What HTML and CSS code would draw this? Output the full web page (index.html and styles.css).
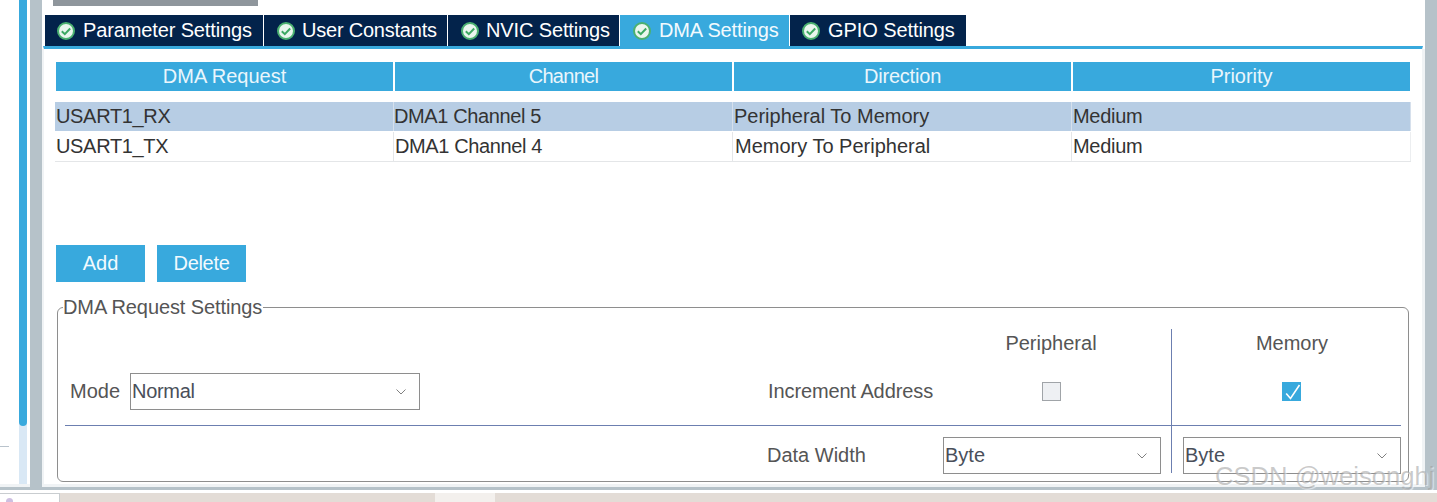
FILE: index.html
```html
<!DOCTYPE html>
<html lang="en">
<head>
<meta charset="utf-8">
<title>DMA Settings</title>
<link rel="stylesheet" href="styles.css">
</head>
<body>
<div class="app">
  <aside class="gutter"><div class="gutter-line"></div></aside>
  <div class="scroll"><div class="scroll-thumb"></div></div>
  <div class="bar"></div>
  <main class="main">
    <div class="progress"></div>
    <nav class="tabs">
      <div class="tab"><svg class="ok" viewBox="0 0 18 18"><circle cx="9" cy="9" r="8" fill="#eaf6ee" stroke="#4bb070" stroke-width="2"/><path d="M4.8 9.2l3 2.9 5.4-5.6" fill="none" stroke="#3da862" stroke-width="2"/></svg><span>Parameter Settings</span></div>
      <div class="tab"><svg class="ok" viewBox="0 0 18 18"><circle cx="9" cy="9" r="8" fill="#eaf6ee" stroke="#4bb070" stroke-width="2"/><path d="M4.8 9.2l3 2.9 5.4-5.6" fill="none" stroke="#3da862" stroke-width="2"/></svg><span>User Constants</span></div>
      <div class="tab"><svg class="ok" viewBox="0 0 18 18"><circle cx="9" cy="9" r="8" fill="#eaf6ee" stroke="#4bb070" stroke-width="2"/><path d="M4.8 9.2l3 2.9 5.4-5.6" fill="none" stroke="#3da862" stroke-width="2"/></svg><span>NVIC Settings</span></div>
      <div class="tab active"><svg class="ok" viewBox="0 0 18 18"><circle cx="9" cy="9" r="8" fill="#eaf6ee" stroke="#4bb070" stroke-width="2"/><path d="M4.8 9.2l3 2.9 5.4-5.6" fill="none" stroke="#3da862" stroke-width="2"/></svg><span>DMA Settings</span></div>
      <div class="tab"><svg class="ok" viewBox="0 0 18 18"><circle cx="9" cy="9" r="8" fill="#eaf6ee" stroke="#4bb070" stroke-width="2"/><path d="M4.8 9.2l3 2.9 5.4-5.6" fill="none" stroke="#3da862" stroke-width="2"/></svg><span>GPIO Settings</span></div>
    </nav>
    <section class="panel">
      <div class="thead">
        <div>DMA Request</div><div class="channel">Channel</div><div class="direction">Direction</div><div>Priority</div>
      </div>
      <div class="row selected">
        <div class="c-name">USART1_RX</div><div class="c-chan">DMA1 Channel 5</div><div>Peripheral To Memory</div><div class="c-prio">Medium</div>
      </div>
      <div class="row">
        <div class="c-name">USART1_TX</div><div class="c-chan">DMA1 Channel 4</div><div>Memory To Peripheral</div><div class="c-prio">Medium</div>
      </div>
      <div class="actions">
        <button class="btn">Add</button>
        <button class="btn btn-del">Delete</button>
      </div>
      <fieldset class="settings">
        <legend>DMA Request Settings</legend>
        <div class="form">
          <div class="cell-empty"></div>
          <div class="cell-empty"></div>
          <div class="col-head">Peripheral</div>
          <div class="col-head mem">Memory</div>

          <div class="mode"><label>Mode</label>
            <div class="select mode-select"><span class="normal">Normal</span><svg class="chev" viewBox="0 0 10 6"><path d="M0.5 0.5L5 5l4.5-4.5" fill="none" stroke="#808080"/></svg></div>
          </div>
          <div class="lbl inc">Increment Address</div>
          <div class="check-cell"><span class="check"></span></div>
          <div class="check-cell mem"><span class="check on"><svg viewBox="0 0 19 19"><path d="M4.2 11.5l4.3 5L17.5 3" fill="none" stroke="#fff" stroke-width="1.6"/></svg></span></div>

          <div class="divider"></div>

          <div class="cell-empty"></div>
          <div class="lbl low">Data Width</div>
          <div class="low"><div class="select"><span>Byte</span><svg class="chev" viewBox="0 0 10 6"><path d="M0.5 0.5L5 5l4.5-4.5" fill="none" stroke="#808080"/></svg></div></div>
          <div class="low mem"><div class="select"><span>Byte</span><svg class="chev" viewBox="0 0 10 6"><path d="M0.5 0.5L5 5l4.5-4.5" fill="none" stroke="#808080"/></svg></div></div>
        </div>
      </fieldset>
    </section>
  </main>
  <div class="bar"></div>
</div>
<footer class="strip">
  <div class="strip-a"><i class="dot"></i></div>
  <div class="strip-b"></div>
  <div class="strip-c"></div>
  <div class="strip-b"></div>
</footer>
<div class="watermark">CSDN @weisonghj</div>
</body>
</html>
```
FILE: styles.css
```css
* { box-sizing: border-box; }
html, body { margin: 0; height: 502px; overflow: hidden; background: #fff; }
body { font-family: "Liberation Sans", Arial, sans-serif; font-size: 20px; color: #333; position: relative; }

.app { display: grid; grid-template-columns: 19px 8px 3px 12px 1383px 12px; height: 490px; border-bottom: 3px solid #b6c2c9; background: linear-gradient(#fff, #fff) top / 100% 484px no-repeat, #f0f3f5; }
.gutter { padding-top: 446px; }
.gutter-line { width: 9px; height: 1px; background: #b9c3cc; }
.scroll { background: #d9e8f5; height: 484px; grid-column: 2; }
.scroll-thumb { height: 426px; background: #38a9dd; border-radius: 0 0 4px 4px; }
.gutter + .scroll + .bar { grid-column: 4; }
.bar { background: #b6c2c9; }

.main { display: flex; flex-direction: column; min-width: 0; padding-bottom: 3px; background: linear-gradient(#fff, #fff) top / 100% 49px no-repeat, #f0f3f5; }
.progress { width: 205px; height: 6px; margin-left: 11px; background: #8f969c; flex: none; }
.tabs { display: flex; margin: 9px 0 0 3px; height: 31px; flex: none; }
.tab { display: flex; align-items: center; background: #03234b; color: #fff; margin-right: 1px; height: 31px; padding-left: 12px; letter-spacing: -0.13px; }
.tab:nth-child(1) { width: 218px; }
.tab:nth-child(2) { width: 183px; padding-left: 13px; letter-spacing: -0.22px; }
.tab:nth-child(3) { width: 171px; padding-left: 13px; }
.tab:nth-child(4) { width: 169px; padding-left: 13px; }
.tab:nth-child(5) { width: 176px; margin-right: 0; letter-spacing: -0.08px; }
.tab.active { background: #38a9dd; color: #f2fafe; }
.ok { width: 18px; height: 18px; margin-right: 8px; flex: none; }
.tab:nth-child(2) .ok, .tab:nth-child(3) .ok { margin-right: 7px; }

.panel { flex: 1; margin: 0 2px 0 1px; background: #fff; border-top: 3px solid #38a9dd; border-left: 1px solid #f0f3f5; border-right: 1px solid #f0f3f5; padding: 13px 0 0 11px; display: flex; flex-direction: column; }

.thead { display: grid; grid-template-columns: 339px 339px 339px 337px; margin-left: 1px; width: 1354px; height: 29px; }
.thead div { background: #38a9dd; color: #eaf6fc; text-align: center; line-height: 29px; margin-right: 2px; }
.thead div:last-child { margin-right: 0; }
.thead .channel { letter-spacing: -0.7px; }
.thead .direction { letter-spacing: -0.2px; }

.row { display: grid; grid-template-columns: 339px 339px 339px 339px; width: 1356px; height: 30px; line-height: 28px; border-bottom: 1px solid #e4e6e8; }
.row div { padding-left: 1px; border-right: 1px solid #e4e6e8; }
.row.selected { background: #b7cde4; margin-top: 11px; border-bottom-color: #fff; }
.row.selected div { border-right-color: #d6e0ec; }
.row:not(.selected) div:last-child { border-right-color: #eceef0; }
.row .c-name { letter-spacing: -0.33px; }
.row .c-chan { letter-spacing: -0.38px; padding-left: 0; }
.row .c-prio { letter-spacing: -0.3px; }
.row:not(.selected) .c-chan { padding-left: 1px; }
.row:not(.selected) div:nth-child(3) { padding-left: 2px; }

.actions { display: flex; gap: 12px; margin: 83px 0 0 1px; }
.btn { width: 89px; height: 37px; border: 0; padding: 0; background: #38a9dd; color: #f2fafe; font: inherit; }
.btn-del { letter-spacing: -0.3px; }

.settings { margin: 14px 0 0 2px; padding: 0 7px; width: 1352px; height: 186px; border: 1px solid #8e8e8e; border-radius: 6px; min-width: 0; color: #555; }
.settings legend { padding: 0 1px 0 0; margin-left: -2px; line-height: 22px; letter-spacing: -0.1px; }

.form { display: grid; grid-template-columns: 702px 176px 228px 230px; grid-template-rows: 44px 52px 1px 48px; margin-top: 11px; }
.col-head { line-height: 28px; display: flex; justify-content: center; padding-right: 12px; }
.col-head.mem { padding-right: 0; padding-left: 11px; }
.mem { border-left: 1px solid #6c7fb0; }

.mode { display: flex; align-items: flex-start; padding-left: 5px; }
.mode label { width: 60px; line-height: 37px; flex: none; }
.select { display: flex; align-items: center; justify-content: space-between; height: 37px; width: 218px; border: 1px solid #8e8e8e; padding: 0 13px 0 1px; background: #fff; color: #4a4f5a; }
.mode-select { width: 290px; }
.normal { letter-spacing: -0.3px; }
.chev { width: 10px; height: 6px; flex: none; }
.lbl { line-height: 37px; }
.lbl.inc { letter-spacing: -0.1px; padding-left: 1px; }
.check-cell { display: flex; justify-content: center; align-items: flex-start; padding-top: 9px; padding-right: 12px; }
.check-cell.mem { padding-left: 11px; padding-right: 1px; }
.check { display: block; width: 19px; height: 19px; background: #eef0f3; border: 1px solid #a0a4a8; }
.check.on { background: #38a9dd; border: 0; }
.check.on svg { display: block; width: 19px; height: 19px; }
.divider { grid-column: 1 / -1; background: #6c7fb0; }
.low { padding-top: 11px; }
.low.mem { padding-left: 11px; height: 47px; }

.strip { display: flex; height: 9px; position: absolute; left: 0; right: 0; top: 493px; }
.strip-a { width: 60px; border: 1px solid #c9cdd0; border-width: 1px 1px 0 0; position: relative; background: #fff; }
.dot { position: absolute; left: 6px; top: 4px; width: 7px; height: 7px; border-radius: 50%; background: #cdbfe0; }
.strip-b { width: 375px; background: #e3dcd6; }
.strip-c { width: 60px; background: #f3f0ed; }
.strip-b:last-child { flex: 1; }

.watermark { position: absolute; left: 1215px; top: 461px; font-size: 25.6px; line-height: 30px; color: rgba(150,150,150,.5); text-shadow: 1px 1px 1px rgba(255,255,255,.6); white-space: nowrap; }
```
